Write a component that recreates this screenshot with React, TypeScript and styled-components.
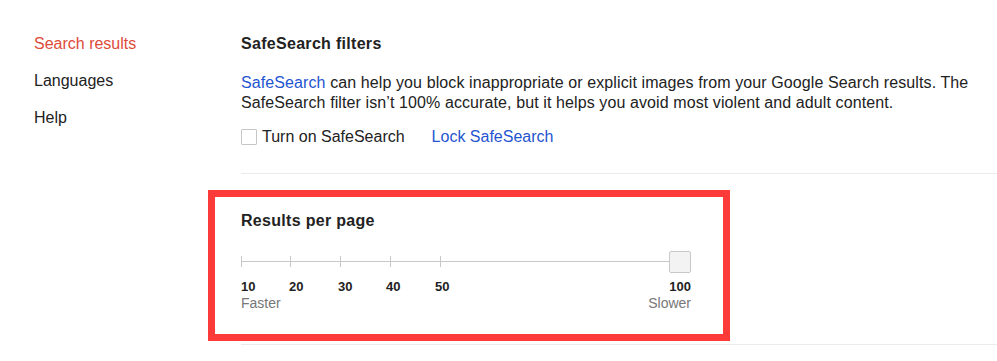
import React from "react";
import styled, { createGlobalStyle } from "styled-components";

const Global = createGlobalStyle`
  html, body { margin: 0; padding: 0; background: #fff; }
  body { font-family: "Liberation Sans", Arial, sans-serif; color: #222; }
`;

const Page = styled.div`
  display: flex;
  width: 997px;
  height: 361px;
  overflow: hidden;
  background: #fff;
`;

const Nav = styled.nav`
  width: 241px;
  flex: none;
  box-sizing: border-box;
  padding: 34px 0 0 34px;
  display: flex;
  flex-direction: column;
  gap: 17px;
`;

const NavItem = styled.a<{ $active?: boolean }>`
  font-size: 16px;
  line-height: 20px;
  color: ${(p) => (p.$active ? "#dd4b39" : "#222")};
  text-decoration: none;
`;

const Content = styled.main`
  flex: 1;
  min-width: 0;
  padding-top: 34px;
`;

const Section = styled.section`
  border-bottom: 1px solid #ebebeb;
`;

const SafeSection = styled(Section)`
  padding-bottom: 26px;
`;

const ResultsSection = styled(Section)`
  padding-top: 16px;
  padding-bottom: 3px;
`;

const Heading = styled.h2`
  margin: 0;
  font-size: 16px;
  line-height: 20px;
  font-weight: 700;
  letter-spacing: 0.3px;
  color: #222;
`;

const Paragraph = styled.p`
  margin: 19px 0 0;
  font-size: 16px;
  line-height: 20px;
  letter-spacing: 0.1px;
  color: #222;
`;

const Link = styled.a`
  color: #1f55d0;
  text-decoration: none;
`;

const OptionRow = styled.div`
  margin-top: 14px;
  display: flex;
  align-items: center;
  font-size: 16px;
  line-height: 20px;
`;

const CheckLabel = styled.label`
  display: flex;
  align-items: center;
  gap: 5px;
  color: #222;
`;

const CheckBox = styled.span`
  width: 16px;
  height: 16px;
  box-sizing: border-box;
  border: 1px solid #c6c6c6;
  border-radius: 1px;
  background: #fff;
`;

const LockLink = styled(Link)`
  margin-left: 27px;
`;

const Highlight = styled.div`
  margin-left: -33px;
  width: fit-content;
  border: 7px solid #fd3a3a;
  padding: 14px 32px 22px 26px;
`;

const Slider = styled.div`
  position: relative;
  width: 450px;
  height: 22px;
  margin-top: 20px;
`;

const Track = styled.div`
  position: absolute;
  left: 0;
  right: 22px;
  top: 10px;
  height: 1px;
  background: #c8c8c8;
`;

const Tick = styled.div`
  position: absolute;
  top: 5px;
  width: 1px;
  height: 11px;
  background: #c8c8c8;
`;

const Thumb = styled.div`
  position: absolute;
  right: 0;
  top: 0;
  width: 22px;
  height: 22px;
  box-sizing: border-box;
  border: 1px solid #c8c8c8;
  border-radius: 2px;
  background: #f3f3f3;
`;

const ValueRow = styled.div`
  position: relative;
  width: 450px;
  height: 16px;
  margin-top: 6px;
`;

const Value = styled.span`
  position: absolute;
  top: 0;
  font-size: 13px;
  line-height: 16px;
  font-weight: 700;
  color: #222;
`;

const SpeedRow = styled.div`
  width: 450px;
  display: flex;
  justify-content: space-between;
  font-size: 14px;
  line-height: 17px;
  color: #777;
`;

const ticks = [0, 49, 99, 149, 199];
const values = [
  { label: "10", left: 0 },
  { label: "20", left: 48 },
  { label: "30", left: 97 },
  { label: "40", left: 145 },
  { label: "50", left: 194 },
];

export default function App() {
  return (
    <>
      <Global />
      <Page>
        <Nav>
          <NavItem $active>Search results</NavItem>
          <NavItem>Languages</NavItem>
          <NavItem>Help</NavItem>
        </Nav>
        <Content>
          <SafeSection>
            <Heading>SafeSearch filters</Heading>
            <Paragraph>
              <Link>SafeSearch</Link> can help you block inappropriate or explicit images from your
              Google Search results. The SafeSearch filter isn’t 100% accurate, but it helps you
              avoid most violent and adult content.
            </Paragraph>
            <OptionRow>
              <CheckLabel>
                <CheckBox />
                Turn on SafeSearch
              </CheckLabel>
              <LockLink>Lock SafeSearch</LockLink>
            </OptionRow>
          </SafeSection>
          <ResultsSection>
            <Highlight>
              <Heading>Results per page</Heading>
              <Slider>
                <Track />
                {ticks.map((t) => (
                  <Tick key={t} style={{ left: t }} />
                ))}
                <Thumb />
              </Slider>
              <ValueRow>
                {values.map((v) => (
                  <Value key={v.label} style={{ left: v.left }}>
                    {v.label}
                  </Value>
                ))}
                <Value style={{ right: 0 }}>100</Value>
              </ValueRow>
              <SpeedRow>
                <span>Faster</span>
                <span>Slower</span>
              </SpeedRow>
            </Highlight>
          </ResultsSection>
        </Content>
      </Page>
    </>
  );
}
